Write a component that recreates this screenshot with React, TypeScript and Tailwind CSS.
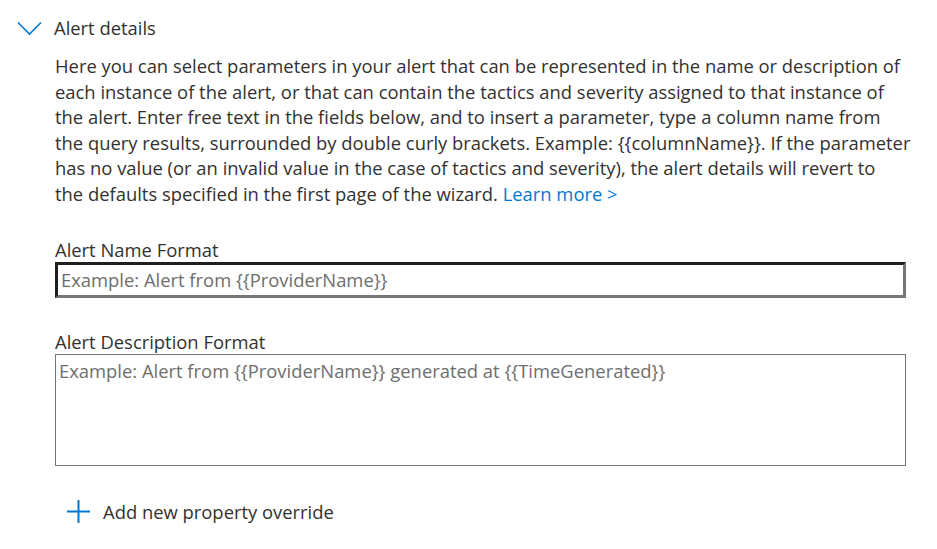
const lines = [
  "Here you can select parameters in your alert that can be represented in the name or description of",
  "each instance of the alert, or that can contain the tactics and severity assigned to that instance of",
  "the alert. Enter free text in the fields below, and to insert a parameter, type a column name from",
  "the query results, surrounded by double curly brackets. Example: {{columnName}}. If the parameter",
  "has no value (or an invalid value in the case of tactics and severity), the alert details will revert to",
];

function App() {
  return (
    <div className="w-[937px] h-[549px] bg-white text-[#323130] font-['Open_Sans',sans-serif]">
      {/* Section header */}
      <div className="flex items-center h-[42px] pt-[14px] pl-[17px]">
        <svg width="25" height="15" viewBox="0 0 25 15" className="shrink-0">
          <path d="M1 1.5 L12.5 13 L24 1.5" fill="none" stroke="#0078d4" strokeWidth="1.6" />
        </svg>
        <span className="ml-[12px] text-[18.4px] leading-[24px]">Alert details</span>
      </div>

      <div className="pl-[55px] pr-[20px]">
        <p className="mt-[11px] text-[18.4px] leading-[25.6px] w-[870px] whitespace-nowrap">
          {lines.map((l) => (
            <span key={l} className="block">{l}</span>
          ))}
          <span className="block">
            the defaults specified in the first page of the wizard.{" "}
            <a className="text-[#0078d4]">Learn more &gt;</a>
          </span>
        </p>

        {/* Alert name */}
        <div className="mt-[32px]">
          <label className="block text-[18.4px] leading-[22px]">Alert Name Format</label>
          <div className="mt-[1px] w-[851px] h-[36px] border-[3px] border-t-[#1f1f1f] border-l-[#1f1f1f] border-r-[#767676] border-b-[#767676] flex items-center px-[3px]">
            <span className="text-[18.4px] text-[#6e6e6e]">Example: Alert from {"{{ProviderName}}"}</span>
          </div>
        </div>

        {/* Alert description */}
        <div className="mt-[33px]">
          <label className="block text-[18.4px] leading-[22px]">Alert Description Format</label>
          <div className="mt-[1px] w-[851px] h-[112px] border border-[#767676] px-[3px] pt-[2px]">
            <span className="text-[18.4px] text-[#6e6e6e]">
              Example: Alert from {"{{ProviderName}}"} generated at {"{{TimeGenerated}}"}
            </span>
          </div>
        </div>
      </div>

      {/* Add override */}
      <button className="mt-[34px] ml-[67px] flex items-center gap-[13px]">
        <svg width="23" height="23" viewBox="0 0 23 23" className="shrink-0">
          <path d="M11.5 0 V23 M0 11.5 H23" stroke="#0078d4" strokeWidth="2" fill="none" />
        </svg>
        <span className="text-[18.4px] leading-[24px] text-[#323130]">Add new property override</span>
      </button>
    </div>
  );
}

export default App;
